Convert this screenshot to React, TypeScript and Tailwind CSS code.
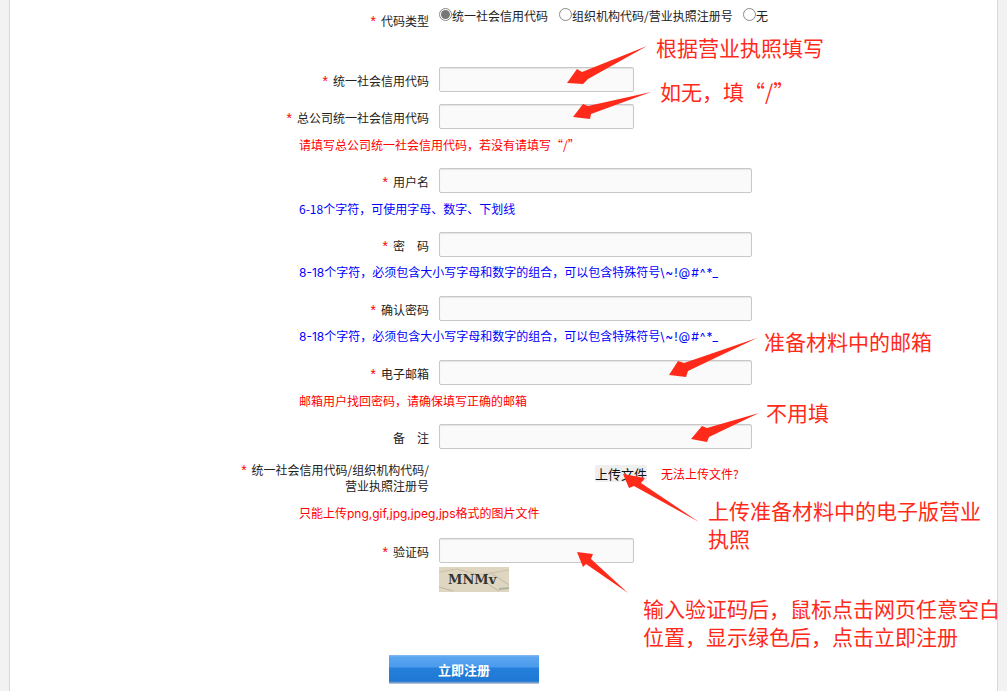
import type { ReactNode } from 'react';

const blue = 'text-[#0000ff]';
const red = 'text-[#ff0000]';
const latinFont = "font-['Inter','Noto_Sans_CJK_SC',sans-serif]";
const passwordHint = (
  <>
    8-18个字符，必须包含大小写字母和数字的组合，可以包含特殊符号
    <span className="tracking-[1px]">\~!@#^*_</span>
  </>
);

const arrows = [
  '647,46 582,72 577,69 567,83 583,84 588,79',
  '651,92 588,106 583,104 573,117 590,119 591,114',
  '757,338 684,363 678,361 669,375 686,377 688,371',
  '759,413 707,428 702,426 691,439 707,442 709,437',
  '699,522 641,483 645,478 623,474 629,488 634,486',
  '628,593 591,559 593,554 577,552 583,567 586,564',
];

const notes = [
  { text: '根据营业执照填写', cls: 'left-[656px] top-[33px]' },
  { text: '如无，填“/”', cls: 'left-[660px] top-[77px]' },
  { text: '准备材料中的邮箱', cls: 'left-[764px] top-[327px]' },
  { text: '不用填', cls: 'left-[766px] top-[398px]' },
  { text: '上传准备材料中的电子版营业执照', cls: 'left-[708px] top-[496px] w-[280px]' },
  { text: '输入验证码后，鼠标点击网页任意空白位置，显示绿色后，点击立即注册', cls: 'left-[643px] top-[594px] w-[360px]' },
];

const Star = () => <span className={`${red} mr-[5px] text-sm leading-none font-['Liberation_Sans']`}>*</span>;

const Label = ({ text, star = true, leading = 'leading-[25px]' }: { text: string; star?: boolean; leading?: string }) => (
  <label className={`w-[419px] h-[25px] text-right text-xs text-[#222] shrink-0 ${leading}`}>
    {star && <Star />}
    {text}
  </label>
);

const Row = ({
  label,
  star,
  short,
  className,
}: {
  label: string;
  star?: boolean;
  short?: boolean;
  className: string;
}) => (
  <div className={`flex gap-[10px] h-[25px] ${className}`}>
    <Label text={label} star={star} leading="leading-[27px]" />
    <input
      type="text"
      className={`h-[25px] ${short ? 'w-[195px]' : 'w-[313px]'} bg-[#fafafa] border border-[#c8c8c8] rounded-[2px] shadow-[inset_0_1px_1px_#e4e4e4]`}
    />
  </div>
);

const Hint = ({ text, color, className }: { text: ReactNode; color: string; className: string }) => (
  <p className={`ml-[289px] h-4 text-xs leading-4 ${color} ${className}`}>{text}</p>
);

const Radio = ({ text, checked, className }: { text: string; checked?: boolean; className?: string }) => (
  <span className={`flex items-start text-xs leading-4 text-[#222] ${className ?? ''}`}>
    <span className="w-[13px] h-[13px] rounded-full border border-[#8a8a8a] bg-white flex items-center justify-center shrink-0">
      {checked && <span className="w-[9px] h-[9px] rounded-full bg-[#777]" />}
    </span>
    {text}
  </span>
);

const Captcha = () => (
  <div className="relative w-[70px] h-[25px] ml-[429px] mt-1 bg-[#dfd6c2] overflow-hidden">
    <svg className="absolute inset-0" width="70" height="25" viewBox="0 0 70 25">
      <path d="M0 5 L18 2 L40 8 L70 3" stroke="#cbbfa6" fill="none" />
      <path d="M44 14 L60 24 M52 6 L70 18 M0 20 L14 24" stroke="#bdb7a0" fill="none" />
      <path d="M60 22 L70 21" stroke="#aeb3a0" strokeWidth="2" fill="none" />
    </svg>
    <span className="absolute left-[9px] top-[4px] font-['DejaVu_Serif'] font-bold text-[13px] leading-[18px] text-[#33352e]">
      MNMv
    </span>
  </div>
);

export default function App() {
  return (
    <div className="relative h-[691px] overflow-hidden bg-[#f2f2f2] px-[9px] font-['Noto_Sans_CJK_SC','Noto_Sans',sans-serif]">
      <div className="h-full w-[989px] bg-white border-x border-[#d8d8d8]">
        <form className="pt-2">
          <div className="flex gap-[10px] h-[26px]">
            <Label text="代码类型" />
            <div className="flex">
              <Radio text="统一社会信用代码" checked className="w-[120px]" />
              <Radio text="组织机构代码/营业执照注册号" className="w-[184px]" />
              <Radio text="无" />
            </div>
          </div>

          <Row label="统一社会信用代码" short className="mt-[33px]" />
          <Row label="总公司统一社会信用代码" short className="mt-3" />
          <Hint text="请填写总公司统一社会信用代码，若没有请填写“/”" color={red} className="mt-2" />

          <Row label="用户名" className="mt-[15px]" />
          <Hint text="6-18个字符，可使用字母、数字、下划线" color={blue} className="mt-2" />

          <Row label="密　码" className="mt-[15px]" />
          <Hint text={passwordHint} color={blue} className={`mt-2 ${latinFont}`} />

          <Row label="确认密码" className="mt-[15px]" />
          <Hint text={passwordHint} color={blue} className={`mt-2 ${latinFont}`} />

          <Row label="电子邮箱" className="mt-[15px]" />
          <Hint text="邮箱用户找回密码，请确保填写正确的邮箱" color={red} className="mt-2" />

          <Row label="备　注" star={false} className="mt-[15px]" />

          <div className="flex gap-[10px] h-8 mt-[13px]">
            <label className="w-[419px] h-8 text-right text-xs leading-4 text-[#222] shrink-0">
              <Star />
              统一社会信用代码/组织机构代码/
              <br />
              营业执照注册号
            </label>
            <div className="flex items-start ml-[156px] pt-[3px]">
              <button type="button" className="h-[17px] w-[52px] bg-[#efefef] rounded-[2px] text-[13px] leading-[17px] text-[#111]">
                上传文件
              </button>
              <a className={`ml-[14px] text-xs leading-[17px] ${red}`}>无法上传文件?</a>
            </div>
          </div>
          <Hint text="只能上传png,gif,jpg,jpeg,jps格式的图片文件" color={red} className={`mt-3 ${latinFont}`} />

          <Row label="验证码" short className="mt-4" />
          <Captcha />

          <button
            type="button"
            className="block ml-[379px] mt-[63px] w-[150px] h-[29px] text-[13px] font-bold text-white bg-[linear-gradient(#8bbcf0_0,#5aa5f0_2px,#4a9bec_12px,#2480dc_13px,#1f78d4_26px,#8aa5c8_28px,#dfe3ea_29px)]"
          >
            立即注册
          </button>
        </form>
      </div>

      {/* annotations drawn on top of the screenshot */}
      <svg className="absolute inset-0 pointer-events-none" width="1007" height="691" viewBox="0 0 1007 691">
        {arrows.map((points) => (
          <polygon key={points} points={points} fill="#ff2a1a" />
        ))}
      </svg>
      {notes.map((note) => (
        <span key={note.text} className={`absolute ${note.cls} text-[21px] leading-7 text-[#ff2a1a]`}>
          {note.text}
        </span>
      ))}
    </div>
  );
}
